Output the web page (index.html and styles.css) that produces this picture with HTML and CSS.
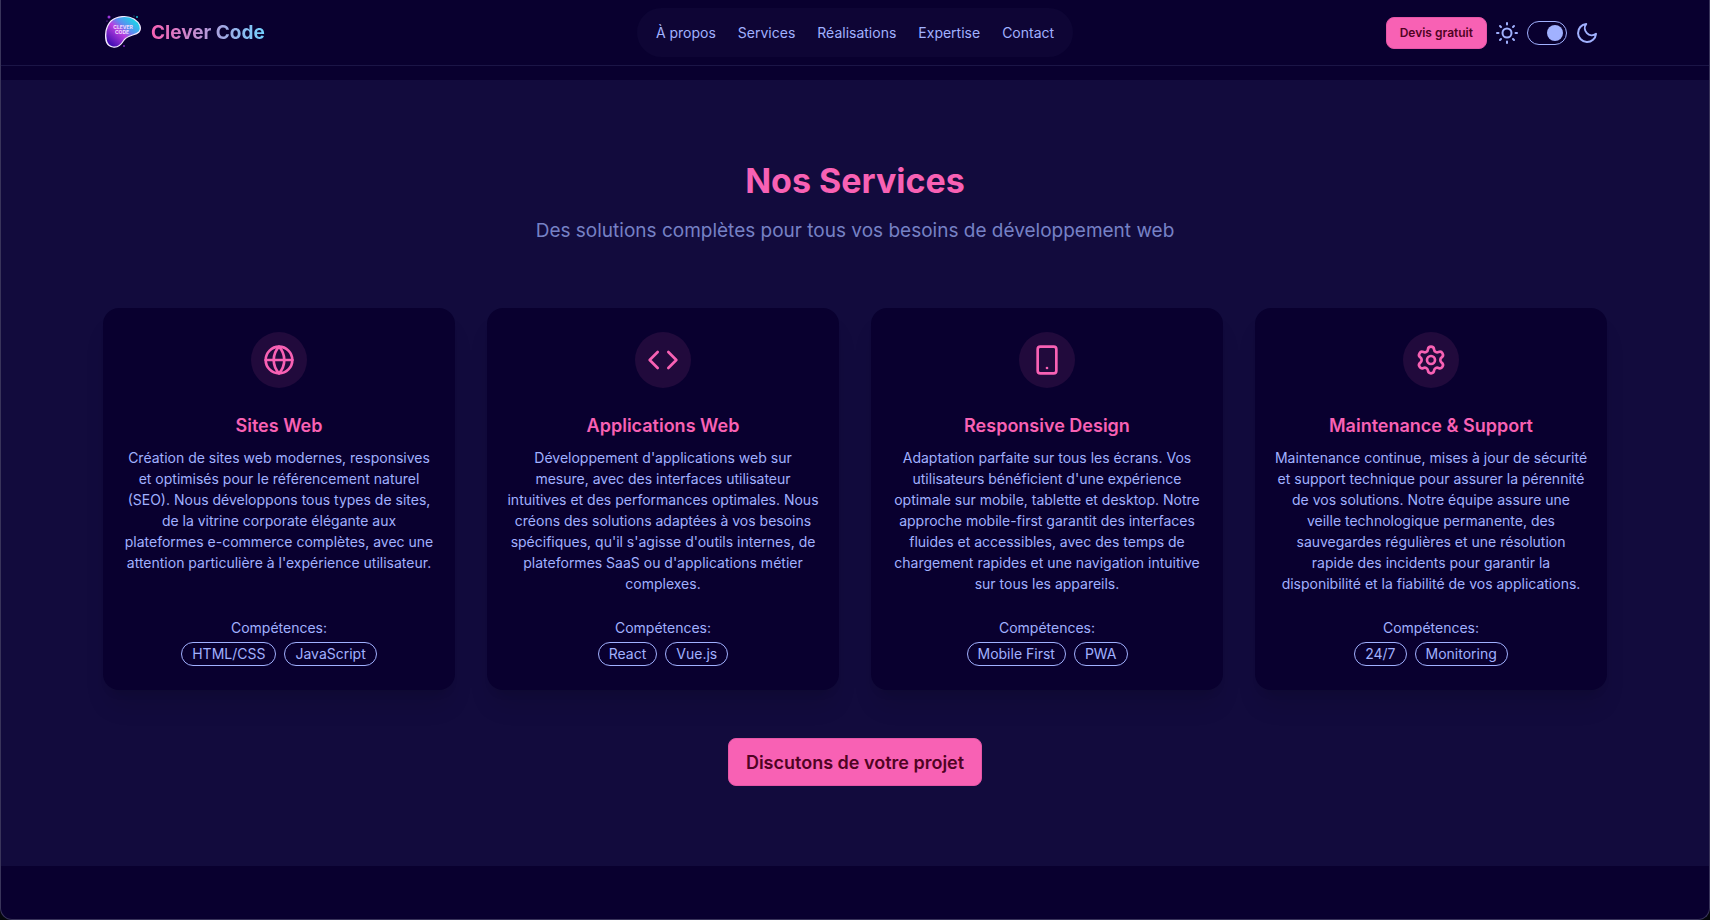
FILE: index.html
```html
<!DOCTYPE html>
<html lang="fr">
<head>
<meta charset="utf-8">
<meta name="viewport" content="width=device-width, initial-scale=1">
<title>Clever Code</title>
<link rel="stylesheet" href="styles.css">
</head>
<body>
<div class="window">
  <header class="header">
    <div class="container navbar">
      <a class="brand" href="#">
        <svg class="brand-logo" viewBox="0 0 36 36" aria-hidden="true">
          <defs>
            <linearGradient id="blob" x1="0.1" y1="0.9" x2="0.9" y2="0.1">
              <stop offset="0" stop-color="#3d0bb0"/>
              <stop offset="0.45" stop-color="#b93fe0"/>
              <stop offset="0.65" stop-color="#5a8df0"/>
              <stop offset="1" stop-color="#12e0e8"/>
            </linearGradient>
          </defs>
          <path d="M6 6C12 1 22 0 29 4C35 8 37 13 34 17C30 21 24 19 19 25C16 30 13 33 8 32C1 31 0 23 1 16C2 12 3 9 6 6Z" fill="url(#blob)" stroke="#f3e9ff" stroke-width="1.2"/>
          <text class="brand-mark" x="18" y="14" text-anchor="middle">CLEVER</text>
          <text class="brand-mark" x="17" y="19" text-anchor="middle">CODE</text>
          <circle cx="4" cy="2" r="1.5" fill="#9a35d8"/>
          <circle cx="2" cy="6" r="0.6" fill="#9a35d8"/>
          <circle cx="32" cy="2" r="1" fill="#12b8c8"/>
          <circle cx="29" cy="1" r="0.5" fill="#12b8c8"/>
          <circle cx="19" cy="31" r="1" fill="#7a25b8"/>
        </svg>
        <span class="brand-name">Clever Code</span>
      </a>
      <nav class="menu" aria-label="Navigation principale">
        <a href="#">À propos</a>
        <a href="#">Services</a>
        <a href="#">Réalisations</a>
        <a href="#">Expertise</a>
        <a href="#">Contact</a>
      </nav>
      <div class="actions">
        <button class="btn btn-small" type="button">Devis gratuit</button>
        <svg class="icon" viewBox="0 0 24 24" aria-hidden="true"><circle cx="12" cy="12" r="4.5"/><path d="M12 2v1.500M12 20.500v1.500M2 12h1.500M20.500 12h1.500M5 5l1 1M18 18l1 1M5 19l1-1M18 6l1-1"/></svg>
        <input class="toggle" type="checkbox" checked aria-label="Thème sombre">
        <svg class="icon" viewBox="0 0 24 24" aria-hidden="true"><path d="M21 12.790A9 9 0 1 1 11.210 3 7 7 0 0 0 21 12.790z"/></svg>
      </div>
    </div>
  </header>
  <main>
    <section class="services">
      <div class="container">
        <h2 class="title">Nos Services</h2>
        <p class="subtitle">Des solutions complètes pour tous vos besoins de développement web</p>
        <div class="cards">
          <article class="card">
            <div class="card-icon"><svg viewBox="0 0 24 24" aria-hidden="true"><circle cx="12" cy="12" r="10"/><path d="M2 12h20M12 2a15.300 15.300 0 0 1 4 10 15.300 15.300 0 0 1-4 10 15.300 15.300 0 0 1-4-10 15.300 15.300 0 0 1 4-10z"/></svg></div>
            <h3 class="card-title">Sites Web</h3>
            <p class="card-text">Création de sites web modernes, responsives<br>et optimisés pour le référencement naturel<br>(SEO). Nous développons tous types de sites,<br>de la vitrine corporate élégante aux<br>plateformes e-commerce complètes, avec une<br>attention particulière à l'expérience utilisateur.</p>
            <div class="skills"><p>Compétences:</p><ul class="badges"><li>HTML/CSS</li><li>JavaScript</li></ul></div>
          </article>
          <article class="card">
            <div class="card-icon"><svg viewBox="0 0 24 24" aria-hidden="true"><path d="M16 18l6-6-6-6M8 6l-6 6 6 6"/></svg></div>
            <h3 class="card-title">Applications Web</h3>
            <p class="card-text">Développement d'applications web sur<br>mesure, avec des interfaces utilisateur<br>intuitives et des performances optimales. Nous<br>créons des solutions adaptées à vos besoins<br>spécifiques, qu'il s'agisse d'outils internes, de<br>plateformes SaaS ou d'applications métier<br>complexes.</p>
            <div class="skills"><p>Compétences:</p><ul class="badges"><li>React</li><li>Vue.js</li></ul></div>
          </article>
          <article class="card">
            <div class="card-icon"><svg viewBox="0 0 24 24" aria-hidden="true"><rect x="5" y="2" width="14" height="20" rx="2"/><path d="M12 18h.010"/></svg></div>
            <h3 class="card-title">Responsive Design</h3>
            <p class="card-text">Adaptation parfaite sur tous les écrans. Vos<br>utilisateurs bénéficient d'une expérience<br>optimale sur mobile, tablette et desktop. Notre<br>approche mobile-first garantit des interfaces<br>fluides et accessibles, avec des temps de<br>chargement rapides et une navigation intuitive<br>sur tous les appareils.</p>
            <div class="skills"><p>Compétences:</p><ul class="badges"><li>Mobile First</li><li>PWA</li></ul></div>
          </article>
          <article class="card">
            <div class="card-icon"><svg viewBox="0 0 24 24" aria-hidden="true"><path d="M9.671 4.136a2.340 2.340 0 0 1 4.659 0 2.340 2.340 0 0 0 3.319 1.915 2.340 2.340 0 0 1 2.330 4.033 2.340 2.340 0 0 0 0 3.831 2.340 2.340 0 0 1-2.330 4.033 2.340 2.340 0 0 0-3.319 1.915 2.340 2.340 0 0 1-4.659 0 2.340 2.340 0 0 0-3.320-1.915 2.340 2.340 0 0 1-2.330-4.033 2.340 2.340 0 0 0 0-3.831A2.340 2.340 0 0 1 6.350 6.051a2.340 2.340 0 0 0 3.319-1.915"/><circle cx="12" cy="12" r="3"/></svg></div>
            <h3 class="card-title">Maintenance &amp; Support</h3>
            <p class="card-text">Maintenance continue, mises à jour de sécurité<br>et support technique pour assurer la pérennité<br>de vos solutions. Notre équipe assure une<br>veille technologique permanente, des<br>sauvegardes régulières et une résolution<br>rapide des incidents pour garantir la<br>disponibilité et la fiabilité de vos applications.</p>
            <div class="skills"><p>Compétences:</p><ul class="badges"><li>24/7</li><li>Monitoring</li></ul></div>
          </article>
        </div>
        <div class="cta"><button class="btn btn-large" type="button">Discutons de votre projet</button></div>
      </div>
    </section>
  </main>
</div>
</body>
</html>
```
FILE: styles.css
```css
:root {
  --base: #09002f;
  --base-alt: #120b3d;
  --text: #a1b1ff;
  --primary: #f861b4;
  --primary-content: #500323;
}

* { box-sizing: border-box; margin: 0; padding: 0; }

body {
  background: #05070c;
  color: var(--text);
  font-family: Inter, "Liberation Sans", sans-serif;
  font-size: 14px;
}

.window {
  min-height: 100vh;
  background: var(--base);
  border: 1px solid #39345a;
  border-top: 0;
  border-radius: 0 0 12px 12px;
  overflow: hidden;
}

.container { width: 100%; max-width: 1536px; margin: 0 auto; padding: 0 16px; }

.header { border-bottom: 1px solid #1b1546; margin-bottom: 14px; }

.navbar {
  display: grid;
  grid-template-columns: 1fr auto 1fr;
  align-items: center;
  min-height: 65px;
}

.brand { display: flex; align-items: center; gap: 10px; color: inherit; text-decoration: none; }
.brand-logo { width: 36px; height: 36px; margin-left: 2px; overflow: visible; }
.brand-mark { fill: #f2dcff; font: 700 5px Inter, sans-serif; }
.brand-name {
  font-size: 19px;
  line-height: 28px;
  font-weight: 700;
  background: linear-gradient(90deg, #f861b4, #71d1fe);
  background-clip: text;
  color: transparent;
}

.menu {
  display: flex;
  align-items: center;
  height: 49px;
  padding: 0 8px;
  border-radius: 25px;
  background: #0e0535;
}
.menu a { padding: 6px 11px; line-height: 21px; color: inherit; text-decoration: none; }

.actions { display: flex; align-items: center; justify-content: flex-end; gap: 8px; padding-right: 8px; }

.btn {
  border: 1px solid #e556a7;
  border-radius: 8px;
  background: var(--primary);
  color: var(--primary-content);
  font-family: inherit;
  font-weight: 600;
  cursor: pointer;
}
.btn-small { height: 32px; padding: 0 13px; font-size: 12px; }
.btn-large { height: 48px; padding: 0 17px; font-size: 18px; }

.icon {
  width: 24px;
  height: 24px;
  fill: none;
  stroke: var(--text);
  stroke-width: 2;
  stroke-linecap: round;
  stroke-linejoin: round;
}

.toggle {
  appearance: none;
  display: flex;
  align-items: center;
  width: 40px;
  height: 24px;
  padding: 3px;
  border: 1px solid var(--text);
  border-radius: 12px;
}
.toggle::before {
  content: "";
  width: 16px;
  height: 16px;
  border-radius: 50%;
  background: var(--text);
}
.toggle:checked { justify-content: flex-end; }

.services { padding: 80px 0; background: var(--base-alt); }

.title { text-align: center; font-size: 34px; line-height: 42px; font-weight: 700; color: var(--primary); }
.subtitle { margin: 15px 0 63px; text-align: center; font-size: 19px; line-height: 28px; color: #7681c5; }

.cards { display: grid; grid-template-columns: repeat(4, minmax(0, 1fr)); gap: 32px; }

.card {
  display: flex;
  flex-direction: column;
  align-items: center;
  padding: 24px 16px;
  border-radius: 16px;
  background: var(--base);
  box-shadow: 0 20px 25px -5px rgba(0, 0, 0, 0.1), 0 8px 10px -6px rgba(0, 0, 0, 0.1);
  text-align: center;
}
.card-icon {
  display: grid;
  place-items: center;
  width: 56px;
  height: 56px;
  margin-bottom: 24px;
  border-radius: 50%;
  background: #210a3c;
}
.card-icon svg {
  width: 32px;
  height: 32px;
  fill: none;
  stroke: var(--primary);
  stroke-width: 2;
  stroke-linecap: round;
  stroke-linejoin: round;
}
.card-title { margin-bottom: 7px; font-size: 18px; line-height: 28px; font-weight: 600; color: var(--primary); }
.card-text { margin-bottom: 23px; line-height: 21px; }

.skills { margin-top: auto; line-height: 21px; }
.badges { display: flex; justify-content: center; gap: 8px; margin-top: 4px; list-style: none; }
.badges li { padding: 0 10px; border: 1px solid var(--text); border-radius: 12px; line-height: 22px; }

.cta { display: flex; justify-content: center; margin-top: 48px; }
```
